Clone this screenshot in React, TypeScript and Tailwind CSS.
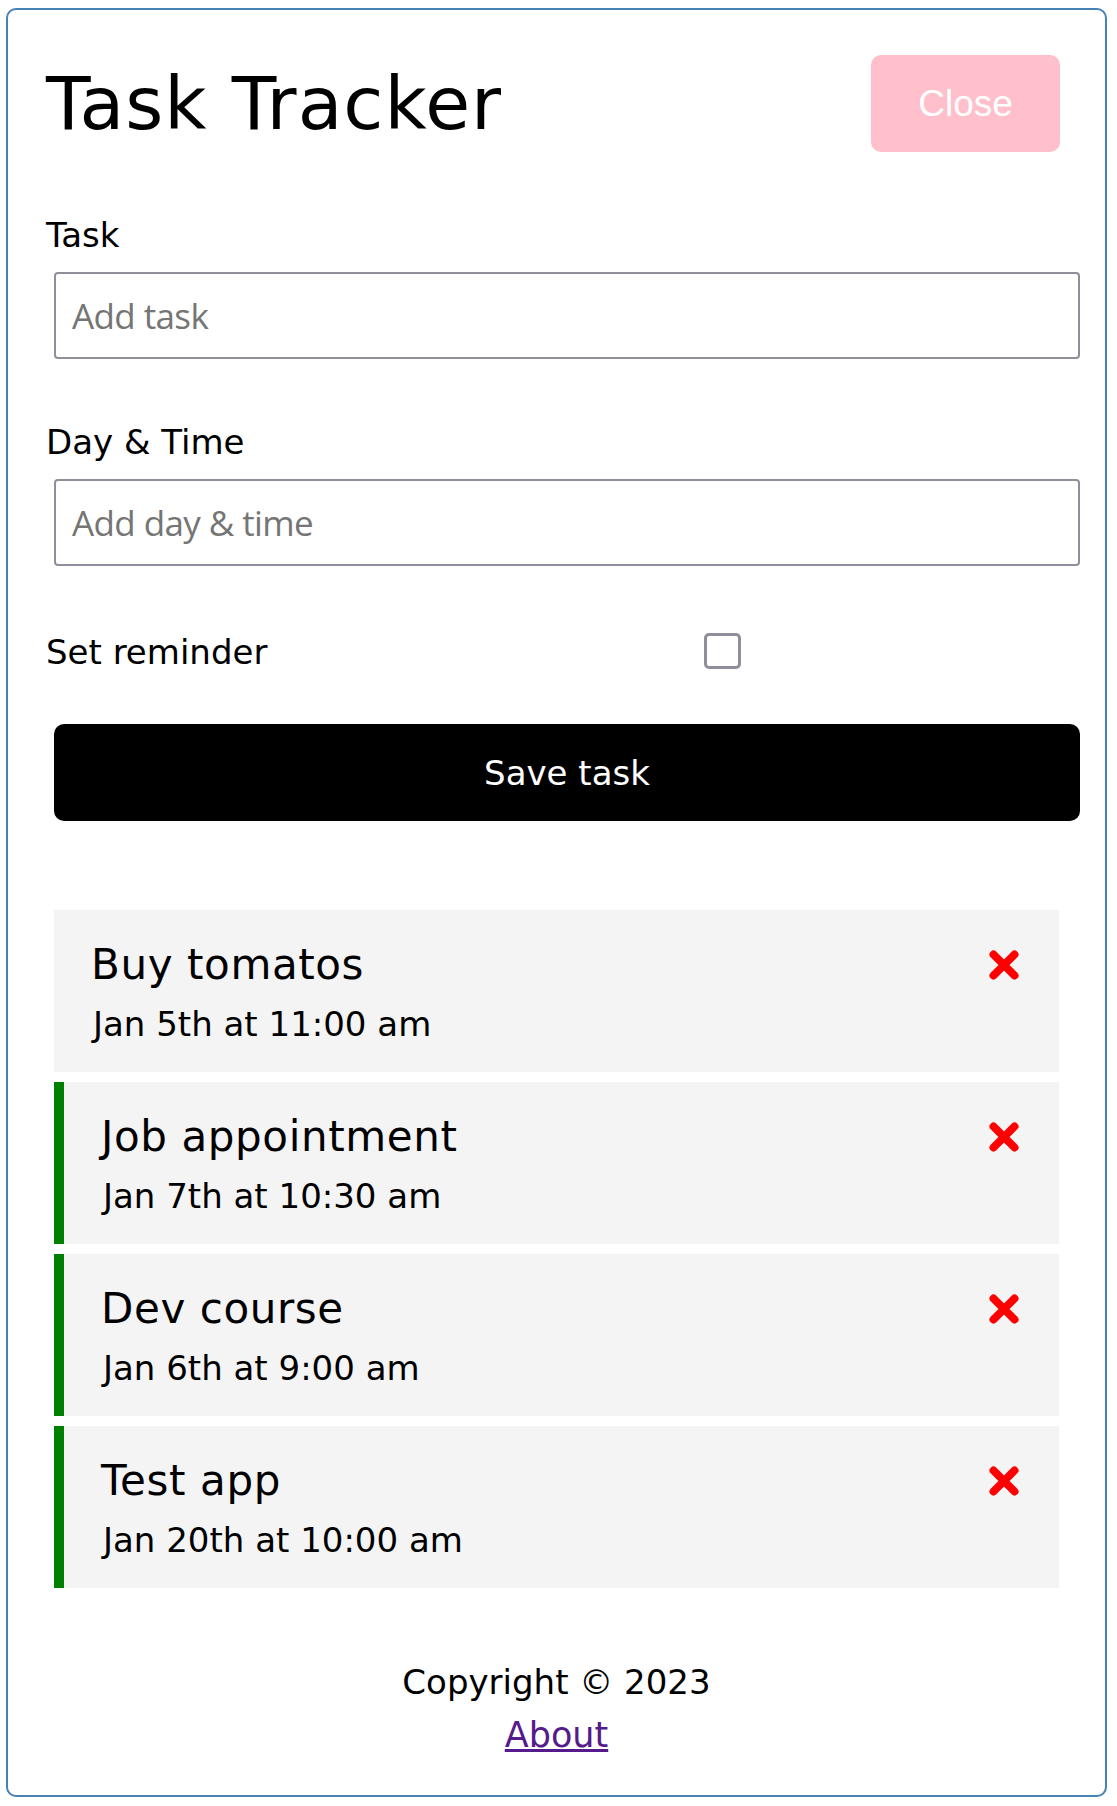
import React from "react";

type Task = { text: string; day: string; reminder: boolean };

const tasks: Task[] = [
  { text: "Buy tomatos", day: "Jan 5th at 11:00 am", reminder: false },
  { text: "Job appointment", day: "Jan 7th at 10:30 am", reminder: true },
  { text: "Dev course", day: "Jan 6th at 9:00 am", reminder: true },
  { text: "Test app", day: "Jan 20th at 10:00 am", reminder: true },
];

function TimesIcon() {
  return (
    <svg width="30" height="30" viewBox="0 0 30 30" aria-hidden="true">
      <path
        d="M4.5 4.5L25.5 25.5M25.5 4.5L4.5 25.5"
        stroke="#ff0000"
        strokeWidth="8"
        strokeLinecap="round"
        fill="none"
      />
    </svg>
  );
}

function TaskItem({ task }: { task: Task }) {
  return (
    <div
      className={
        task.reminder
          ? "mx-[8px] flex h-[162px] items-start justify-between border-l-[10px] border-[#008000] bg-[#f4f4f4] pl-[37px] pr-[40px] pt-[30px]"
          : "mx-[8px] flex h-[162px] items-start justify-between bg-[#f4f4f4] pl-[37px] pr-[40px] pt-[30px]"
      }
    >
      <div>
        <h3 className="text-[42px] font-normal leading-[50px] tracking-[0.6px]">{task.text}</h3>
        <p className="mt-[14px] pl-[2px] text-[34px] leading-[40px]">{task.day}</p>
      </div>
      <div className="mt-[10px]">
        <TimesIcon />
      </div>
    </div>
  );
}

export default function App() {
  return (
    <div className="min-h-[1806px] bg-white pt-[8px] font-['DejaVu_Sans',sans-serif] text-black">
      <div className="ml-[6px] w-[1101px] rounded-[10px] border-2 border-[#4682b4] px-[38px] pb-[40px] pt-[45px]">
        <header className="flex h-[97px] items-center justify-between">
          <h1 className="text-[73px] font-normal leading-[80px] tracking-[1px]">Task Tracker</h1>
          <button className="mr-[7px] h-[97px] w-[189px] rounded-[10px] bg-[#ffc0cb] font-['Liberation_Sans',Arial,sans-serif] text-[37px] text-white">
            Close
          </button>
        </header>

        <form onSubmit={(e) => e.preventDefault()}>
          <div className="mt-[63px]">
            <label className="block text-[34px] leading-[40px]">Task</label>
            <input
              type="text"
              placeholder="Add task"
              className="ml-[8px] mt-[17px] block h-[87px] w-[1026px] rounded-[4px] border-2 border-[#8f8e9b] bg-white pl-[16px] font-['Open_Sans',sans-serif] text-[35px] tracking-[-0.6px] outline-none placeholder:text-[#757575]"
            />
          </div>
          <div className="mt-[63px]">
            <label className="block text-[34px] leading-[40px]">Day &amp; Time</label>
            <input
              type="text"
              placeholder="Add day & time"
              className="ml-[8px] mt-[17px] block h-[87px] w-[1026px] rounded-[4px] border-2 border-[#8f8e9b] bg-white pl-[16px] font-['Open_Sans',sans-serif] text-[35px] tracking-[-0.6px] outline-none placeholder:text-[#757575]"
            />
          </div>
          <div className="mt-[66px] flex h-[40px] items-start">
            <label className="flex-1 text-[34px] leading-[40px]">Set reminder</label>
            <div className="flex flex-[2] justify-center pr-[6px]">
              <input
                type="checkbox"
                className="mt-[1px] h-[36px] w-[37px] appearance-none rounded-[5px] border-[3.5px] border-[#8f8e9b] bg-white"
              />
            </div>
          </div>
          <button
            type="submit"
            className="ml-[8px] mt-[52px] block h-[97px] w-[1026px] rounded-[10px] bg-black text-[34px] leading-[40px] text-white"
          >
            Save task
          </button>
        </form>

        <div className="mt-[89px] flex flex-col gap-[10px]">
          {tasks.map((t) => (
            <TaskItem key={t.text} task={t} />
          ))}
        </div>

        <footer className="mt-[74px] text-center">
          <p className="text-[34px] leading-[40px]">Copyright © 2023</p>
          <div className="mt-[13px] text-[35px] leading-[40px]">
            <a href="#" className="text-[#551a8b] underline">
              About
            </a>
          </div>
        </footer>
      </div>
    </div>
  );
}
